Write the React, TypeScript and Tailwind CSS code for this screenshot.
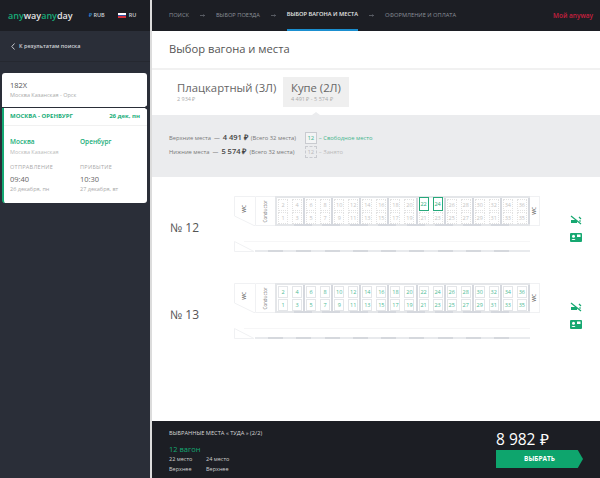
const compartments = [0, 1, 2, 3, 4, 5, 6, 7, 8];

const legendPrices = [
  { label: "Верхние места", price: "4 491 ₽", total: "(Всего 32 места)" },
  { label: "Нижние места", price: "5 574 ₽", total: "(Всего 32 места)" },
];

function Seat({ n, free, picked }: { n: number; free: boolean; picked: boolean }) {
  if (picked) {
    return (
      <div className="flex h-[14px] w-[10px] items-center justify-center border border-[#27a97b] bg-white text-[5.5px] text-[#27a97b]">
        {n}
      </div>
    );
  }
  if (free) {
    return (
      <div className="flex h-[12px] w-[10px] items-center justify-center border border-[#e4e6e9] bg-white text-[5.5px] text-[#4dba94]">
        {n}
      </div>
    );
  }
  return (
    <div className="flex h-[12px] w-[10px] items-center justify-center border border-dotted border-[#e2e2e2] bg-white text-[5.5px] text-[#c4c4c4]">
      {n}
    </div>
  );
}

function NavArrow() {
  return (
    <svg width="5" height="3" viewBox="0 0 5 3" fill="none" stroke="#70747c" strokeWidth="0.7" className="mx-[11px]">
      <path d="M0 1.500H4.500M3.300 0.500 4.500 1.500 3.300 2.500" />
    </svg>
  );
}

function Wagon({ number, picked, allFree }: { number: string; picked: number[]; allFree: boolean }) {
  return (
    <div className="flex h-[87px] items-start pl-[18px]">
      <div className="w-[64px] pt-[23px] text-[12px] leading-[18px] text-[#555]">№ {number}</div>
      <div className="w-[306px]">
        <div className="flex h-[30px] items-stretch">
          <div className="relative flex w-[22px] items-center justify-center">
            <svg width="22" height="30" viewBox="0 0 22 30" className="absolute left-0 top-0">
              <path d="M0.5 0.5H21.500V29.500H20L0.500 20Z" fill="#fff" stroke="#f0f1f3" />
            </svg>
            <span className="relative -mt-[4px] -rotate-90 text-[5px] font-semibold text-[#777]">WC</span>
          </div>
          <div className="flex w-[19px] items-center justify-center border-y border-[#f0f1f3]">
            <span className="-rotate-90 text-[4.5px] text-[#777]">Conductor</span>
          </div>
          <div className="grid w-[255px] grid-cols-9 border-y-2 border-l-2 border-[#e4e6e9]">
            {compartments.map((c) => {
              const pair = [
                [c * 4 + 2, c * 4 + 4],
                [c * 4 + 1, c * 4 + 3],
              ];
              return (
                <div key={c} className="relative flex flex-col justify-center border-r-2 border-[#d5d8de] pl-[1px]">
                  {pair.map((row) => (
                    <div key={row[0]} className="flex h-[13px] items-end gap-[4px]">
                      {row.map((n) => (
                        <Seat key={n} n={n} free={allFree} picked={picked.includes(n)} />
                      ))}
                    </div>
                  ))}
                  {c < 8 && <div className="absolute -bottom-[2px] -right-[9px] h-[2px] w-[18px] bg-[#d5d8de]" />}
                </div>
              );
            })}
          </div>
          <div className="flex w-[10px] items-center justify-center border-y border-r border-[#f0f1f3]">
            <span className="-rotate-90 text-[5px] font-semibold text-[#777]">WC</span>
          </div>
        </div>
        <div className="relative mt-[15px] h-[11px]">
          <svg width="22" height="11" viewBox="0 0 22 11" className="absolute left-0 top-0" fill="none" stroke="#f0f1f3">
            <path d="M0.500 10.500V0.500L20 10.500H0.500Z" />
          </svg>
          <div className="absolute inset-x-[10px] top-0 h-px bg-[#f6f6f7]" />
          <div className="absolute bottom-0 left-[21px] flex h-[2px] w-[275px] bg-[#e8eaed] pl-[13px]">
            {compartments.map((c) => (
              <div key={c} className="mr-[13.300px] w-[15px] bg-[#d5d8dd]" />
            ))}
          </div>
        </div>
      </div>
      <div className="flex flex-col items-center gap-[7px] pl-[30px] pt-[19px]">
        <svg width="12" height="11" viewBox="0 0 12 11" fill="none" stroke="#16a871">
          <path d="M1 1 11 9" strokeWidth="1.200" />
          <path d="M1 5h6v3H1z" fill="#16a871" stroke="none" />
          <path d="M9 2l2 2M9 6h2" strokeWidth="1.200" />
        </svg>
        <svg width="12" height="9" viewBox="0 0 12 9">
          <rect width="12" height="9" rx="1" fill="#16a871" />
          <circle cx="3.500" cy="3.300" r="1.500" fill="#fff" />
          <path d="M1.500 7c0-1.500 4-1.500 4 0z" fill="#fff" />
          <rect x="7" y="1.500" width="3.500" height="2.500" fill="#fff" />
        </svg>
      </div>
    </div>
  );
}

export default function App() {
  return (
    <div className="flex h-[478px] w-[600px] overflow-hidden bg-white font-['Open_Sans',sans-serif]">
      <aside className="flex w-[150px] shrink-0 flex-col bg-[#2a2e38]">
        <div className="flex h-[31px] items-center bg-[#1c1e24] pl-[8px]">
          <span className="w-[65px] text-[9px] font-semibold leading-none">
            <span className="text-[#18ad78]">any</span>
            <span className="text-[#e4e4e4]">way</span>
            <span className="text-[#18ad78]">any</span>
            <span className="text-[#e4e4e4]">day</span>
          </span>
          <span className="ml-[16px] text-[5.500px] font-semibold text-[#cfd2d8]">
            <span className="text-[#2f7fc4]">₽</span> RUB
          </span>
          <span className="ml-[13px] flex h-[5px] w-[8px] flex-col">
            <span className="h-1/3 bg-white" />
            <span className="h-1/3 bg-[#2b4fa8]" />
            <span className="h-1/3 bg-[#d0303a]" />
          </span>
          <span className="ml-[3px] text-[5.500px] font-semibold text-[#cfd2d8]">RU</span>
        </div>
        <div className="flex h-[31px] items-center gap-[4px] border-b border-[#252830] pl-[11px]">
          <svg width="4" height="7" viewBox="0 0 4 7" fill="none" stroke="#c5c8ce">
            <path d="M3.500 0.500 0.800 3.500 3.500 6.500" />
          </svg>
          <span className="text-[5.500px] font-semibold text-[#d0d2d7]">К результатам поиска</span>
        </div>
        <div className="relative mx-[2px] mt-[11px] w-[145px]">
          <div className="h-[34px] rounded-t-[3px] bg-white pl-[8px] pt-[7px]">
            <div className="text-[7.500px] leading-[10px] text-[#555]">182X</div>
            <div className="mt-[1px] text-[5.500px] leading-[8px] text-[#aaa]">Москва Казанская - Орск</div>
          </div>
          <div className="absolute left-[143px] top-[33px] h-[3px] w-[3px] rotate-45 bg-[#2a2e38]" />
          <div className="mt-[1px] h-[95px] rounded-b-[3px] border-l-2 border-[#14a973] bg-white">
            <div className="flex h-[18px] items-center justify-between border-b border-[#f1f1f1] pl-[6px] pr-[7px] text-[6px] font-bold text-[#18ad78]">
              <span>МОСКВА - ОРЕНБУРГ</span>
              <span>26 дек, пн</span>
            </div>
            <div className="grid grid-cols-[70px_1fr] pl-[6px] pt-[11px]">
              <div>
                <div className="text-[6.500px] font-semibold leading-[10px] text-[#18ad78]">Москва</div>
                <div className="text-[5.500px] leading-[10px] text-[#bbb]">Москва Казанская</div>
                <div className="mt-[6px] text-[5.500px] leading-[8px] tracking-[0.3px] text-[#aaa]">ОТПРАВЛЕНИЕ</div>
                <div className="mt-[3px] text-[7.500px] leading-[10px] text-[#666]">09:40</div>
                <div className="text-[5.500px] leading-[10px] text-[#aaa]">26 декабря, пн</div>
              </div>
              <div>
                <div className="text-[6.500px] font-semibold leading-[10px] text-[#18ad78]">Оренбург</div>
                <div className="h-[10px]" />
                <div className="mt-[6px] text-[5.500px] leading-[8px] tracking-[0.3px] text-[#aaa]">ПРИБЫТИЕ</div>
                <div className="mt-[3px] text-[7.500px] leading-[10px] text-[#666]">10:30</div>
                <div className="text-[5.500px] leading-[10px] text-[#aaa]">27 декабря, вт</div>
              </div>
            </div>
          </div>
        </div>
      </aside>

      <main className="flex min-w-0 flex-1 flex-col border-l-2 border-[#dcdcdc]">
        <nav className="flex h-[31px] shrink-0 items-center bg-[#1c1e24] pl-[17px] pr-[7px] text-[5.700px] text-[#8b9099]">
          <span>ПОИСК</span>
          <NavArrow />
          <span>ВЫБОР ПОЕЗДА</span>
          <NavArrow />
          <span className="flex h-full items-center border-b-2 border-[#1b8fd0] font-semibold text-[#e6e6e6]">
            ВЫБОР ВАГОНА И МЕСТА
          </span>
          <NavArrow />
          <span>ОФОРМЛЕНИЕ И ОПЛАТА</span>
          <span className="ml-auto text-[6.500px] font-semibold text-[#c8203f]">Мой anyway</span>
        </nav>

        <div className="flex h-[39px] shrink-0 items-center border-b-2 border-[#f1f1f1] pl-[17px] text-[11.200px] text-[#555]">
          Выбор вагона и места
        </div>

        <div className="flex h-[45px] shrink-0 pl-[17px] pt-[7px]">
          <div className="w-[114px] pl-[8px]">
            <div className="pt-[3px] text-[11.300px] leading-[15px] text-[#666]">Плацкартный (3Л)</div>
            <div className="text-[5.500px] leading-[8px] text-[#aaa]">2 934 ₽</div>
          </div>
          <div className="relative h-[30px] w-[66px] bg-[#efefef] pl-[8px]">
            <div className="pt-[3px] text-[11.300px] leading-[15px] text-[#666]">Купе (2Л)</div>
            <div className="text-[5.500px] leading-[8px] text-[#aaa]">4 491 ₽ - 5 574 ₽</div>
            <div className="absolute -bottom-[8px] left-[29px] h-0 w-0 border-x-[4px] border-b-[3px] border-x-transparent border-b-[#ebecee]" />
          </div>
        </div>

        <div className="flex h-[62px] shrink-0 gap-[9px] bg-[#ebecee] pl-[17px] pt-[17px]">
          <div className="flex flex-col gap-[2px]">
            {legendPrices.map((p) => (
              <div key={p.label} className="flex h-[12px] items-center gap-[3px] text-[5.800px] text-[#777]">
                <span>{p.label}</span>
                <span className="text-[#555]">—</span>
                <span className="text-[7.500px] font-semibold text-[#444]">{p.price}</span>
                <span>{p.total}</span>
              </div>
            ))}
          </div>
          <div className="flex flex-col gap-[2px]">
            <div className="flex h-[12px] items-center gap-[2px] text-[5.800px] text-[#3fb58c]">
              <span className="flex h-[12px] w-[12px] items-center justify-center border border-[#c9cbd0] bg-[#f3f4f5] text-[6px]">12</span>
              <span>– Свободное место</span>
            </div>
            <div className="flex h-[12px] items-center gap-[2px] text-[5.800px] text-[#bbb]">
              <span className="flex h-[12px] w-[12px] items-center justify-center border border-dashed border-[#c9cbd0] text-[6px]">12</span>
              <span>– Занято</span>
            </div>
          </div>
        </div>

        <div className="flex-1 pt-[19px]">
          <Wagon number="12" picked={[22, 24]} allFree={false} />
          <Wagon number="13" picked={[]} allFree={true} />
        </div>

        <footer className="flex h-[57px] shrink-0 justify-between bg-[#1c1e24] pl-[17px] pr-[17px]">
          <div className="pt-[8px]">
            <div className="text-[5.700px] leading-[8px] text-[#d8d8d8]">ВЫБРАННЫЕ МЕСТА « ТУДА » (2/2)</div>
            <div className="mt-[7px] text-[7.500px] leading-[10px] text-[#14a973]">12 вагон</div>
            <div className="grid w-[70px] grid-cols-[37px_1fr] text-[5.500px] leading-[10px] text-[#d0d0d0]">
              <span>22 место</span>
              <span>24 место</span>
              <span>Верхнее</span>
              <span>Верхнее</span>
            </div>
          </div>
          <div className="w-[87px] pt-[8px]">
            <div className="text-[15.500px] leading-[20px] text-white">8 982 ₽</div>
            <div className="mt-px flex h-[18px] items-center justify-center bg-[#0ea56d] text-[6.500px] font-bold text-white [clip-path:polygon(0_0,94%_0,100%_50%,94%_100%,0_100%)]">
              ВЫБРАТЬ
            </div>
          </div>
        </footer>
      </main>
    </div>
  );
}
